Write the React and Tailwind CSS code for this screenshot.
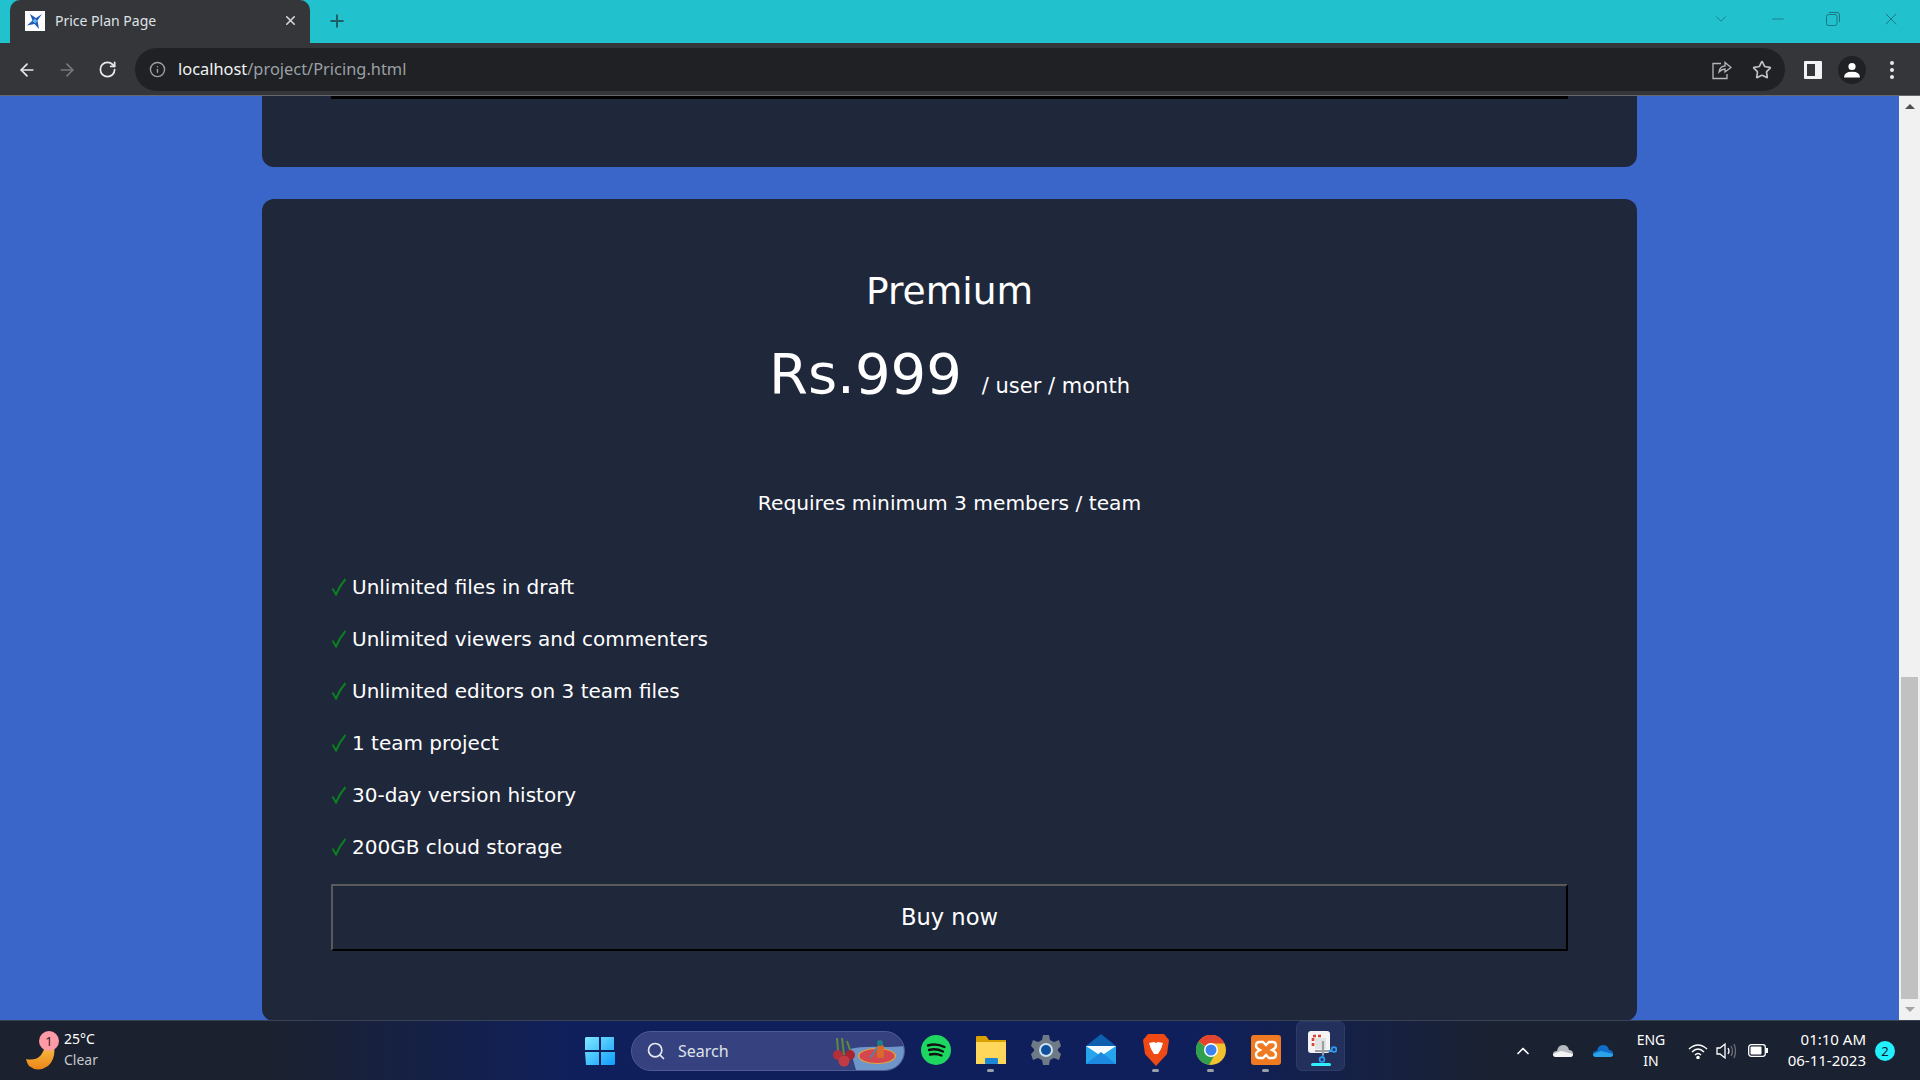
import { ArrowLeft, ArrowRight, RotateCw, Info, X, Plus, Star, Search, ChevronDown, ChevronUp, Minus } from "lucide-react";

const features = [
    "Unlimited files in draft",
    "Unlimited viewers and commenters",
    "Unlimited editors on 3 team files",
    "1 team project",
    "30-day version history",
    "200GB cloud storage",
];

const Check = () => (
    <svg width="16" height="18" viewBox="0 0 16 18" className="shrink-0 -mt-[1px]">
        <path d="M1.5 10.5 L5 16.5 Q8.5 8 14.5 1" fill="none" stroke="#0b7f1f" strokeWidth="2" />
    </svg>
);

const TabBar = () => (
    <div className="h-[43px] bg-[#22c1ce] flex items-start pl-[10px] relative">
        {/* Tab */}
        <div className="w-[300px] h-[43px] bg-[#35363a] rounded-t-[10px] flex items-center pl-[15px] pr-[12px] pb-[2px]">
            <div className="w-5 h-5 bg-white flex items-center justify-center">
                <svg width="18" height="18" viewBox="0 0 18 18">
                    <path d="M16 2 L11.5 8.5 L13 17 L8.5 12 L1 13.5 L6.5 8.5 L4 2 L10 6 Z" fill="#2559b8" />
                    <path d="M9 6.5 L11.5 9 L9 11.5 L6.5 9 Z" fill="#58b6e6" />
                </svg>
            </div>
            <span className="ml-[10px] text-[14px] text-[#dee1e6] font-['Noto_Sans',sans-serif] flex-1 whitespace-nowrap">Price Plan Page</span>
            <X size={15} strokeWidth={2.5} className="text-[#d5d7db]" />
        </div>
        <div className="h-[41px] ml-[17px] flex items-center">
            <Plus size={20} strokeWidth={2.4} className="text-[#1d5f68]" />
        </div>
        {/* Window controls */}
        <div className="ml-auto flex items-center h-[37px] text-[#177984]">
            <ChevronDown size={18} strokeWidth={1.2} className="mr-[39px]" />
            <Minus size={18} strokeWidth={1.2} className="mr-[39px]" />
            <svg width="14" height="14" viewBox="0 0 14 14" fill="none" stroke="currentColor" className="mr-[41px]">
                <rect x="0.5" y="2.5" width="10.5" height="11" rx="2" />
                <path d="M3 0.5 H11 Q13.5 0.5 13.5 3 V10" />
            </svg>
            <X size={20} strokeWidth={1.2} className="mr-[19px]" />
        </div>
    </div>
);

const ToolBar = () => (
    <div className="h-[53px] bg-[#35363a] border-b border-[#65676b] flex items-start pt-[5px]">
        <div className="w-[135px] h-[43px] flex items-center pl-[17px] gap-[20px]">
            <ArrowLeft size={20} strokeWidth={2} className="text-[#e8eaed]" />
            <ArrowRight size={20} strokeWidth={2} className="text-[#77787b]" />
            <RotateCw size={19} strokeWidth={2.2} className="text-[#e8eaed] ml-[1px]" />
        </div>
        <div className="w-[1650px] h-[43px] bg-[#202124] rounded-full flex items-center pl-[14px] pr-[13px]">
            <Info size={17} strokeWidth={2} className="text-[#9aa0a6]" />
            <span className="ml-[12px] text-[16.4px] font-['Noto_Sans',sans-serif] text-[#f1f3f4] whitespace-nowrap">
                localhost<span className="text-[#9aa0a6]">/project/Pricing.html</span>
            </span>
            <svg width="20" height="20" viewBox="0 0 20 20" fill="none" stroke="#b4b7bb" strokeWidth="1.3" className="ml-auto mr-[20px]">
                <path d="M7 12 Q8 6 13 6 V2.5 L19 7.5 L13 12 V9 Q10 9 7 12 Z" />
                <path d="M9 3.5 H1 V18.5 H15 V14" />
            </svg>
            <Star size={20} strokeWidth={2} className="text-[#c0c2c5]" />
        </div>
        <div className="flex-1 h-[43px] flex items-center pl-[19px]">
            <div className="w-[18px] h-[18px] bg-[#f1f3f4] flex justify-start p-[3px] rounded-[1px]">
                <div className="w-[8px] h-[12px] bg-[#35363a]" />
            </div>
            <div className="ml-[16px] w-7 h-7 rounded-full bg-[#202124] flex items-center justify-center">
                <svg width="16" height="16" viewBox="0 0 16 16" fill="#fff">
                    <circle cx="8" cy="4.5" r="3.6" />
                    <path d="M0 15.5 Q0 9.8 8 9.8 Q16 9.8 16 15.5 Z" />
                </svg>
            </div>
            <div className="ml-[24px] flex flex-col gap-[3px]">
                <span className="w-[4px] h-[4px] rounded-full bg-[#e8eaed]" />
                <span className="w-[4px] h-[4px] rounded-full bg-[#e8eaed]" />
                <span className="w-[4px] h-[4px] rounded-full bg-[#e8eaed]" />
            </div>
        </div>
    </div>
);

const Scrollbar = () => (
    <div className="w-[21px] bg-[#f1f1f1] flex flex-col items-center">
        <div className="h-[21px] flex items-center justify-center">
            <div className="border-x-[5px] border-x-transparent border-b-[5px] border-b-[#505050]" />
        </div>
        <div className="mt-[560px] w-[17px] h-[322px] bg-[#c1c1c1]" />
        <div className="h-[21px] flex items-center justify-center">
            <div className="border-x-[5px] border-x-transparent border-t-[5px] border-t-[#a3a3a3]" />
        </div>
    </div>
);

const Page = () => (
    <div className="flex-1 bg-[#3b66c9] overflow-hidden flex flex-col items-center font-['DejaVu_Sans',sans-serif] text-white">
        {/* Bottom of the plan above */}
        <div className="w-[1375px] h-[71px] shrink-0 bg-[#1f273a] rounded-b-[12px] px-[69px]">
            <div className="h-[3px] bg-black" />
        </div>
        {/* Premium */}
        <div className="w-[1375px] shrink-0 mt-[32px] bg-[#1f273a] rounded-[12px] px-[69px] pt-[69px] pb-[70px]">
            <h2 className="text-center text-[37.6px] leading-[46px]">Premium</h2>
            <div className="mt-[27px] text-center leading-[66px] whitespace-nowrap">
                <span className="text-[56px]">Rs.999</span>
                <span className="text-[21px] ml-[20px]">/ user / month</span>
            </div>
            <p className="mt-[69px] text-center text-[20.2px] leading-[26px]">Requires minimum 3 members / team</p>
            <ul className="mt-[58px] flex flex-col gap-[26px]">
                {features.map((f) => (
                    <li key={f} className="flex items-center h-[26px] text-[20px] leading-[26px]">
                        <Check />
                        <span className="ml-[5px]">{f}</span>
                    </li>
                ))}
            </ul>
            <button className="mt-[24px] block w-full h-[67px] border-2 border-t-[#5a5a5a] border-l-[#5a5a5a] border-r-black border-b-black text-[22.6px]">
                Buy now
            </button>
        </div>
    </div>
);

const Dot = ({ on }) => (
    <span className={on ? "w-[7px] h-[3px] mt-[3px] rounded-full bg-[#9aa0aa]" : "w-[7px] h-[3px] mt-[3px] rounded-full bg-transparent"} />
);

const AppIcon = ({ running, children }) => (
    <div className="w-[55px] h-[59px] flex flex-col items-center pt-[13px]">
        <div className="w-[32px] h-[32px] flex items-center justify-center">{children}</div>
        <Dot on={running} />
    </div>
);

const Taskbar = () => (
    <div className="h-[60px] border-t border-[#3a4256] bg-[linear-gradient(90deg,#1b212e_0%,#1b212e_14%,#0f1f5c_30%,#0f1f5c_62%,#1a2130_78%,#1a2130_100%)] flex items-center text-white font-['Noto_Sans',sans-serif] relative">
        {/* Weather */}
        <div className="w-[585px] shrink-0 flex items-center pl-[26px]">
            <div className="relative w-[38px] h-[40px]">
                <svg width="30" height="26" viewBox="0 0 30 26" className="absolute left-0 bottom-0">
                    <defs>
                        <linearGradient id="moon" x1="0" y1="0" x2="0" y2="1">
                            <stop offset="0" stopColor="#f6c146" />
                            <stop offset="1" stopColor="#ee8417" />
                        </linearGradient>
                    </defs>
                    <path d="M0 14 Q10 16 15 10 Q18 6 19 0 L28 1 Q30 14 22 21 Q12 28 3 21 Q1 18 0 14 Z" fill="url(#moon)" />
                </svg>
                <div className="absolute left-[13px] top-0 w-5 h-5 rounded-full bg-[#ff9aa6] text-[#3a1a20] text-[13px] leading-[20px] text-center">1</div>
            </div>
            <div className="text-[14px] leading-[21px] -mt-[3px]">
                <div>25°C</div>
                <div className="text-[#c6c8cc]">Clear</div>
            </div>
        </div>
        {/* Start */}
        <svg width="30" height="30" viewBox="0 0 30 30" className="shrink-0">
            <defs>
                <linearGradient id="win" x1="0" y1="0" x2="1" y2="1">
                    <stop offset="0" stopColor="#7fe8ff" />
                    <stop offset="1" stopColor="#0f9dfb" />
                </linearGradient>
            </defs>
            <path d="M1 1 H14 V14 H0 V2 Z M16 1 H29 V14 H16 Z M0 16 H14 V29 H1 Z M16 16 H30 V28 L29 29 H16 Z" fill="url(#win)" />
        </svg>
        {/* Search */}
        <div className="ml-[16px] w-[274px] h-[40px] rounded-full bg-[#35427f] border border-[#4f5b94] flex items-center pl-[14px] shrink-0 overflow-hidden">
            <Search size={20} strokeWidth={2} className="text-[#e6e8ee]" />
            <span className="ml-[12px] text-[16px] text-[#dfe2ea]">Search</span>
            {/* Search highlight art */}
            <svg width="72" height="38" viewBox="0 0 72 38" className="ml-auto">
                <path d="M18 17 Q30 14 50 15 Q64 15 72 14 V38 H24 Z" fill="#6f96c9" />
                <ellipse cx="45" cy="24" rx="19" ry="8" fill="#e1a23a" />
                <ellipse cx="45" cy="24" rx="17.5" ry="7" fill="#d5474e" />
                <path d="M38 26 L45 16" stroke="#5a7fa8" strokeWidth="2" />
                <rect x="45" y="13" width="7" height="13" rx="2" fill="#d96a2b" />
                <circle cx="48" cy="11" r="3" fill="#1f7f86" />
                <circle cx="6" cy="23" r="5" fill="#b3303a" />
                <circle cx="18" cy="23" r="5" fill="#a8252f" />
                <circle cx="12" cy="29" r="5.5" fill="#c23a44" />
                <path d="M6 18 L5 6 M12 23 L10 6 M18 18 L15 9" stroke="#5f8a3a" strokeWidth="2" />
            </svg>
        </div>
        {/* Pinned apps */}
        <div className="ml-[3px] flex shrink-0">
            <AppIcon>
                <svg width="30" height="30" viewBox="0 0 30 30" fill="none">
                    <circle cx="15" cy="15" r="15" fill="#1ed760" />
                    <path d="M7 10.5 Q15 8 23.5 12 M8 15 Q15 13 22 16.5 M9 19.5 Q15 18 20.5 20.5" stroke="#111" strokeWidth="2.4" strokeLinecap="round" />
                </svg>
            </AppIcon>
            <AppIcon running>
                <svg width="30" height="30" viewBox="0 0 30 30">
                    <path d="M0 2 Q0 1 1 1 H10 L13 5 H30 V10 H0 Z" fill="#d9a000" />
                    <path d="M0 7 H30 V29 H0 Z" fill="#ffd75a" />
                    <rect x="9" y="23" width="13" height="6" rx="1" fill="#1b87d6" />
                </svg>
            </AppIcon>
            <AppIcon>
                <svg width="30" height="30" viewBox="0 0 30 30">
                    <path d="M12 0 H18 L19 5 L23 7 L28 5 L30 11 L27 14 V16 L30 19 L28 25 L23 23 L19 25 L18 30 H12 L11 25 L7 23 L2 25 L0 19 L3 16 V14 L0 11 L2 5 L7 7 L11 5 Z" fill="#6e7a86" />
                    <circle cx="15" cy="15" r="7" fill="#cfe0ee" />
                    <circle cx="15" cy="15" r="5" fill="#0f4f9e" />
                </svg>
            </AppIcon>
            <AppIcon>
                <svg width="30" height="32" viewBox="0 0 30 32">
                    <path d="M0 12 L15 0 L30 12 V30 H0 Z" fill="#0f5fb0" />
                    <path d="M0 12 H30 V30 H0 Z" fill="#27a5ec" />
                    <path d="M0 12 L15 22 L30 12 Z" fill="#f4fbff" />
                    <path d="M0 30 L15 18 L30 30 Z" fill="#1b8ae0" />
                </svg>
            </AppIcon>
            <AppIcon running>
                <svg width="26" height="32" viewBox="0 0 26 32">
                    <path d="M5 0 H21 L26 6 L24 20 L13 32 L2 20 L0 6 Z" fill="#f04a14" />
                    <path d="M6 9 L11 8 L13 9 L15 8 L20 9 L18 15 L15 20 H11 L8 15 Z" fill="#fff" />
                </svg>
            </AppIcon>
            <AppIcon running>
                <svg width="30" height="30" viewBox="0 0 30 30">
                    <circle cx="15" cy="15" r="15" fill="#f2c12e" />
                    <path d="M15 15 L2.5 6.5 A15 15 0 0 1 28.5 8.5 H15 Z" fill="#e2442f" />
                    <path d="M2.5 6.5 A15 15 0 0 0 13 29.9 L19 19 Z" fill="#2fa04e" />
                    <circle cx="15" cy="15" r="7" fill="#fff" />
                    <circle cx="15" cy="15" r="5.5" fill="#3c82f0" />
                </svg>
            </AppIcon>
            <AppIcon running>
                <svg width="30" height="30" viewBox="0 0 30 30">
                    <rect width="30" height="30" rx="3" fill="#ef7a22" />
                    <path d="M8 7 H12 Q15 10 15 10 Q15 10 18 7 H22 Q25 7 25 11 Q25 13 21 15 Q25 17 25 19 Q25 23 22 23 H18 L15 20 L12 23 H8 Q5 23 5 19 Q5 17 9 15 Q5 13 5 11 Q5 7 8 7 Z" fill="none" stroke="#fff" strokeWidth="2.4" />
                </svg>
            </AppIcon>
            <div className="w-[49px] h-[50px] ml-[3px] rounded-[6px] bg-[#24305c] border border-[#2f3b68] flex flex-col items-center pt-[9px]">
                <svg width="32" height="32" viewBox="0 0 32 32">
                    <rect x="3" y="0" width="22" height="22" rx="3" fill="#f4f4f4" />
                    <path d="M8 15 V5 H18" fill="none" stroke="#d8442f" strokeWidth="2.6" strokeDasharray="3 2" />
                    <path d="M10 7 H21 V18 H10 Z" fill="#e3e3e3" />
                    <path d="M18 10 V24 M10 20 H27" stroke="#9aa0a6" strokeWidth="2.2" />
                    <circle cx="29" cy="18.5" r="2.4" fill="none" stroke="#2a9bf0" strokeWidth="1.8" />
                    <circle cx="17" cy="28.5" r="2.4" fill="none" stroke="#2a9bf0" strokeWidth="1.8" />
                    <path d="M24 20 L27 19 M18 24 L17.5 26" stroke="#2a9bf0" strokeWidth="1.8" />
                </svg>
                <span className="w-[20px] h-[3px] rounded-full bg-[#2ff0ff]" />
            </div>
        </div>
        {/* System tray */}
        <div className="ml-[168px] flex items-center shrink-0">
            <ChevronUp size={20} strokeWidth={2} className="text-white" />
            <svg width="20" height="14" viewBox="0 0 20 14" className="ml-[20px]">
                <path d="M3 13 Q0 13 0 10 Q0 7 4 7 Q5 1 10 1 Q15 1 16 6 Q20 6 20 10 Q20 13 17 13 Z" fill="#b8bcc2" />
                <path d="M3 13 Q0 13 0 10 L8 7 L20 10 Q20 13 17 13 Z" fill="#f4f4f4" />
            </svg>
            <svg width="20" height="14" viewBox="0 0 20 14" className="ml-[20px]">
                <path d="M3 13 Q0 13 0 10 Q0 7 4 7 Q5 1 10 1 Q15 1 16 6 Q20 6 20 10 Q20 13 17 13 Z" fill="#0f6fc8" />
                <path d="M3 13 Q0 13 0 10 L8 7 L20 10 Q20 13 17 13 Z" fill="#2ba3ea" />
            </svg>
            <div className="ml-[20px] w-[36px] text-center text-[14px] leading-[21px] -mt-[1px]">
                <div>ENG</div>
                <div>IN</div>
            </div>
            <svg width="20" height="16" viewBox="0 0 20 16" fill="none" stroke="#fff" strokeWidth="1.5" className="ml-[19px]">
                <path d="M1 6 Q10 -2 19 6 M4 9 Q10 3 16 9 M7 12 Q10 9 13 12" />
                <circle cx="10" cy="14.5" r="1" fill="#fff" />
            </svg>
            <svg width="20" height="18" viewBox="0 0 20 18" fill="none" stroke="#fff" strokeWidth="1.3" className="ml-[8px]">
                <path d="M1 6 H4 L9 2 V16 L4 12 H1 Z" />
                <path d="M12 6 Q14 9 12 12" />
                <path d="M15 4 Q18 9 15 14 M18 2 Q21 9 18 16" stroke="#6b6f76" />
            </svg>
            <svg width="20" height="13" viewBox="0 0 20 13" fill="none" className="ml-[12px]">
                <rect x="0.7" y="0.7" width="16.6" height="11.6" rx="2.5" stroke="#fff" strokeWidth="1.3" />
                <rect x="2.5" y="2.5" width="11" height="8" rx="1" fill="#fff" />
                <rect x="18" y="4" width="2" height="5" fill="#fff" />
            </svg>
            <div className="ml-[8px] w-[90px] text-right text-[15px] leading-[21px] whitespace-nowrap -mt-[1px]">
                <div>01:10 AM</div>
                <div>06-11-2023</div>
            </div>
            <div className="ml-[9px] w-5 h-5 rounded-full bg-[#22f0ff] text-[#10202a] text-[13px] leading-[20px] text-center">2</div>
        </div>
    </div>
);

export default function App() {
    return (
        <div className="w-[1920px] h-[1080px] flex flex-col overflow-hidden">
            <TabBar />
            <ToolBar />
            <div className="flex-1 flex min-h-0">
                <Page />
                <Scrollbar />
            </div>
            <Taskbar />
        </div>
    );
}
